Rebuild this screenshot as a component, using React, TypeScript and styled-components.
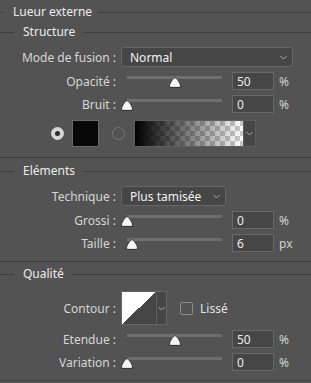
import React from "react"
import styled, { createGlobalStyle } from "styled-components"

const GlobalStyle = createGlobalStyle`
  html, body {
    margin: 0;
    padding: 0;
    background: #535353;
  }
  body {
    font-family: "Noto Sans", "Liberation Sans", sans-serif;
    font-size: 12px;
    color: #d6d6d6;
  }
`

const Panel = styled.div`
  width: 311px;
  height: 383px;
  overflow: hidden;
  background: #535353;
`

const Legend = styled.div<{ $indent: number; $height: number }>`
  display: flex;
  align-items: center;
  height: ${p => p.$height}px;
  color: #ececec;
  white-space: nowrap;

  &::before {
    content: "";
    width: ${p => p.$indent}px;
    height: 1px;
    background: #3f3f3f;
  }
  &::after {
    content: "";
    flex: 1;
    height: 1px;
    background: #3f3f3f;
  }
`

const LegendText = styled.span<{ $left: number; $right: number }>`
  padding: 0 ${p => p.$right}px 0 ${p => p.$left}px;
  line-height: 16px;
`

const Section = styled.section<{ $top: number }>`
  padding-top: ${p => p.$top}px;
  border-bottom: 1px solid #3f3f3f;
`

const Body = styled.div<{ $top: number; $bottom: number }>`
  display: flex;
  flex-direction: column;
  gap: 5px;
  padding: ${p => p.$top}px 0 ${p => p.$bottom}px;
`

const Row = styled.div<{ $height: number }>`
  display: flex;
  align-items: center;
  height: ${p => p.$height}px;
`

const Label = styled.div`
  flex: none;
  width: 116px;
  margin-right: 5px;
  text-align: right;
  white-space: nowrap;
`

const Select = styled.div<{ $width: number }>`
  box-sizing: border-box;
  width: ${p => p.$width}px;
  height: 20px;
  border: 1px solid #666;
  border-radius: 3px;
  background: #464646;
  color: #f2f2f2;
  display: flex;
  align-items: center;
  justify-content: space-between;
  padding: 0 5px 0 8px;
`

const Slider = styled.div`
  position: relative;
  flex: none;
  width: 107px;
  height: 18px;
`

const Track = styled.div`
  margin: 4px 6px 0;
  height: 3px;
  background: #6e6e6e;
`

const Thumb = styled.svg`
  position: absolute;
  top: 5px;
  width: 12px;
  height: 11px;
`

const NumberBox = styled.div`
  box-sizing: border-box;
  flex: none;
  width: 42px;
  height: 18px;
  margin-left: 4px;
  padding-left: 4px;
  border: 1px solid #686868;
  background: #464646;
  color: #ececec;
  display: flex;
  align-items: center;
`

const Unit = styled.span`
  margin-left: 5px;
  color: #d2d2d2;
`

const ColorRow = styled.div`
  display: flex;
  align-items: center;
  height: 27px;
  padding-left: 51px;
  margin-top: 2px;
`

const Radio = styled.div<{ $checked?: boolean }>`
  box-sizing: border-box;
  flex: none;
  width: 13px;
  height: 13px;
  border-radius: 50%;
  display: flex;
  align-items: center;
  justify-content: center;
  border: 1px solid ${p => (p.$checked ? "#d6d6d6" : "#7a7a7a")};
  background: ${p => (p.$checked ? "#d6d6d6" : "transparent")};

  &::after {
    content: "";
    display: ${p => (p.$checked ? "block" : "none")};
    width: 5px;
    height: 5px;
    border-radius: 50%;
    background: #2e2e2e;
  }
`

const Swatch = styled.div`
  box-sizing: border-box;
  flex: none;
  width: 27px;
  height: 27px;
  margin: 0 13px 0 8px;
  border: 1px solid #6a6a6a;
  background: #080808;
`

const GradientPicker = styled.div`
  box-sizing: border-box;
  display: flex;
  width: 122px;
  height: 27px;
  margin-left: 9px;
  border: 1px solid #5e5e5e;
`

const GradientStrip = styled.div`
  width: 108px;
  height: 100%;
  background-image: linear-gradient(to right, #000 0%, rgba(0, 0, 0, 0) 100%),
    conic-gradient(#cbcbcb 25%, #ffffff 0 50%, #cbcbcb 0 75%, #ffffff 0);
  background-size: 100% 100%, 10px 10px;
`

const ArrowCell = styled.div`
  flex: 1;
  display: flex;
  align-items: center;
  justify-content: center;
  background: #464646;
  border-left: 1px solid #5e5e5e;
`

const Contour = styled.div`
  box-sizing: border-box;
  display: flex;
  width: 46px;
  height: 34px;
  border: 1px solid #666;
`

const ContourCurve = styled.div`
  width: 34px;
  height: 100%;
  background: linear-gradient(to bottom right, #ffffff 50%, #454545 50%);
`

const Checkbox = styled.div`
  box-sizing: border-box;
  flex: none;
  width: 13px;
  height: 13px;
  margin-left: 13px;
  border: 1px solid #8a8a8a;
  border-radius: 2px;
`

const CheckLabel = styled.span`
  margin-left: 7px;
  color: #e2e2e2;
`

const Chevron = () => (
  <svg width="7" height="5" viewBox="0 0 7 5">
    <polyline points="0.5,1 3.5,4 6.5,1" fill="none" stroke="#a8a8a8" strokeWidth="1" />
  </svg>
)

function SliderRow({ label, pos, value, unit }: { label: string; pos: number; value: string; unit: string }) {
  return (
    <Row $height={18}>
      <Label>{label}</Label>
      <Slider>
        <Track />
        <Thumb viewBox="0 0 12 11" style={{ left: pos * 0.95 }}>
          <path
            d="M6 0.6 C7.2 0.6 11.4 6 11.4 8.4 L11.4 10.4 L0.6 10.4 L0.6 8.4 C0.6 6 4.8 0.6 6 0.6 Z"
            fill="#f4f4f4"
            stroke="#2a2a2a"
            strokeWidth="1"
          />
        </Thumb>
      </Slider>
      <NumberBox>{value}</NumberBox>
      <Unit>{unit}</Unit>
    </Row>
  )
}

export default function App() {
  return (
    <Panel>
      <GlobalStyle />

      <Legend $indent={4} $height={24}>
        <LegendText $left={9} $right={6}>Lueur externe</LegendText>
      </Legend>

      <Section $top={0}>
        <Legend $indent={14} $height={16}>
          <LegendText $left={9} $right={8}>Structure</LegendText>
        </Legend>
        <Body $top={7} $bottom={10}>
          <Row $height={20}>
            <Label>Mode de fusion :</Label>
            <Select $width={172}>
              Normal
              <Chevron />
            </Select>
          </Row>
          <SliderRow label="Opacité :" pos={50} value="50" unit="%" />
          <SliderRow label="Bruit :" pos={0} value="0" unit="%" />
          <ColorRow>
            <Radio $checked />
            <Swatch />
            <Radio />
            <GradientPicker>
              <GradientStrip />
              <ArrowCell>
                <Chevron />
              </ArrowCell>
            </GradientPicker>
          </ColorRow>
        </Body>
      </Section>

      <Section $top={5}>
        <Legend $indent={14} $height={16}>
          <LegendText $left={9} $right={8}>Eléments</LegendText>
        </Legend>
        <Body $top={7} $bottom={9}>
          <Row $height={20}>
            <Label>Technique :</Label>
            <Select $width={105}>
              Plus tamisée
              <Chevron />
            </Select>
          </Row>
          <SliderRow label="Grossi :" pos={0} value="0" unit="%" />
          <SliderRow label="Taille :" pos={5.5} value="6" unit="px" />
        </Body>
      </Section>

      <Section $top={4}>
        <Legend $indent={14} $height={16}>
          <LegendText $left={9} $right={8}>Qualité</LegendText>
        </Legend>
        <Body $top={9} $bottom={9}>
          <Row $height={34}>
            <Label>Contour :</Label>
            <Contour>
              <ContourCurve />
              <ArrowCell>
                <Chevron />
              </ArrowCell>
            </Contour>
            <Checkbox />
            <CheckLabel>Lissé</CheckLabel>
          </Row>
          <SliderRow label="Etendue :" pos={50} value="50" unit="%" />
          <SliderRow label="Variation :" pos={0} value="0" unit="%" />
        </Body>
      </Section>
    </Panel>
  )
}
